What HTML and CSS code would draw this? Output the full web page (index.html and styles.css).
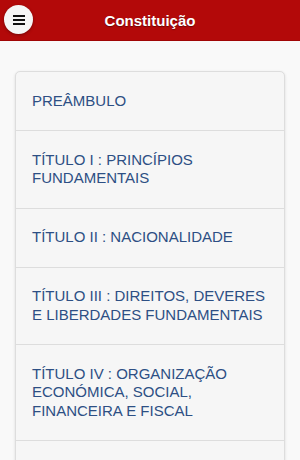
FILE: index.html
```html
<!DOCTYPE html>
<html lang="pt">
<head>
    <meta charset="UTF-8">
    <meta name="viewport" content="width=device-width, initial-scale=1.0">
    <title>Constituição</title>
    <link rel="stylesheet" href="styles.css">
</head>
<body>

<div class="header">
    <button class="menu-btn" aria-label="Menu">
        <svg width="12" height="10" viewBox="0 0 12 10">
            <rect x="0" y="0" width="12" height="2" fill="#111"/>
            <rect x="0" y="4" width="12" height="2" fill="#111"/>
            <rect x="0" y="8" width="12" height="2" fill="#111"/>
        </svg>
    </button>
    <h1>Constituição</h1>
</div>

<div class="content">
    <ul class="list">
        <li><a href="#">PREÂMBULO</a></li>
        <li><a href="#">TÍTULO I : PRINCÍPIOS FUNDAMENTAIS</a></li>
        <li><a href="#">TÍTULO II : NACIONALIDADE</a></li>
        <li><a href="#">TÍTULO III : DIREITOS, DEVERES E LIBERDADES FUNDAMENTAIS</a></li>
        <li><a href="#">TÍTULO IV : ORGANIZAÇÃO ECONÓMICA, SOCIAL, FINANCEIRA E FISCAL</a></li>
        <li class="last"></li>
    </ul>
</div>

</body>
</html>
```

FILE: styles.css
```css
body { margin: 0; font-family: "Liberation Sans", Arial, sans-serif; background-color: #f9f9f9; }
.header {
    position: relative;
    height: 40px;
    background-color: #b30909;
    border-bottom: 1px solid #a00606;
    display: flex;
    align-items: center;
    justify-content: center;
}
.header h1 {
    margin: 0;
    font-size: 15px;
    font-weight: bold;
    color: #fff;
    text-shadow: 0 1px 1px rgba(0, 0, 0, 0.4);
}
.menu-btn {
    position: absolute;
    left: 4px;
    top: 5px;
    width: 29px;
    height: 29px;
    border-radius: 50%;
    border: none;
    padding: 0;
    background-color: #f6f6f6;
    box-shadow: 0 1px 3px rgba(0, 0, 0, 0.35);
    display: flex;
    align-items: center;
    justify-content: center;
}
.content { padding: 30px 15px 15px; }
.list {
    list-style: none;
    margin: 0;
    padding: 0;
    background-color: #f6f6f6;
    border: 1px solid #dddddd;
    border-radius: 5px;
    box-shadow: 0 1px 3px rgba(0, 0, 0, 0.12);
}
.list li { border-bottom: 1px solid #dddddd; }
.list li.last { height: 58px; border-bottom: none; }
.list a {
    display: block;
    padding: 19.75px 16px;
    font-size: 15px;
    line-height: 18.5px;
    color: #2d4f84;
    text-decoration: none;
}
```
